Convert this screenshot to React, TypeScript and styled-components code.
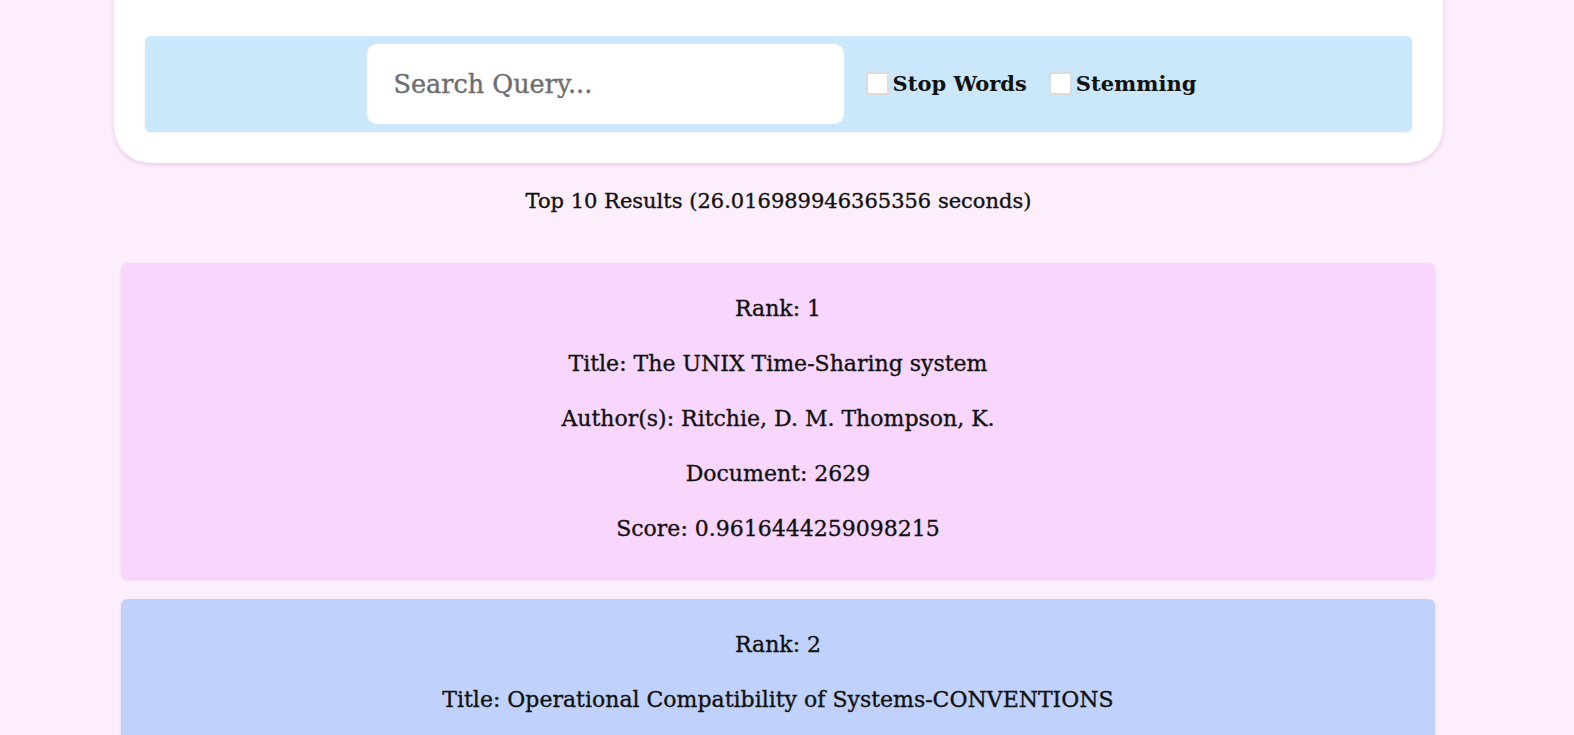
import React, { useLayoutEffect } from 'react';
import styled, { createGlobalStyle } from 'styled-components';

const GlobalStyle = createGlobalStyle`
  html, body {
    margin: 0;
    padding: 0;
    background: #fdeefc;
  }
  body {
    font-family: "DejaVu Serif", "Liberation Serif", serif;
    color: #111;
  }
  ::-webkit-scrollbar {
    width: 4px;
  }
  ::-webkit-scrollbar-track {
    background: #f1f1f1;
  }
  ::-webkit-scrollbar-thumb {
    background: #c1c1c1;
    border-left: 2px solid #f1f1f1;
  }
`;

const Page = styled.div`
  padding: 16px 131px 24px 114px;
`;

const SearchCard = styled.div`
  background: #ffffff;
  border-radius: 36px;
  padding: 262px 31px 31px;
  box-shadow: 0 2px 4px rgba(210, 160, 205, 0.45);
`;

const SearchBar = styled.div`
  background: #cbe7fc;
  border-radius: 6px;
  height: 96px;
  display: flex;
  align-items: center;
  justify-content: center;
  gap: 22px;
  padding-left: 6px;
  box-shadow: 0 1px 3px rgba(0, 0, 0, 0.08);
`;

const QueryInput = styled.input`
  width: 477px;
  height: 80px;
  box-sizing: border-box;
  border: none;
  border-radius: 10px;
  background: #fff;
  padding: 0 27px;
  font-family: inherit;
  font-size: 25.5px;
  color: #333;
  outline: none;
  -webkit-text-stroke: 0.4px currentColor;
  &::placeholder {
    color: #6e6e6e;
  }
`;

const CheckLabel = styled.label`
  display: flex;
  align-items: center;
  gap: 4px;
  font-size: 21px;
  font-weight: 700;
  color: #111;
  padding-bottom: 2px;
`;

const Box = styled.input`
  appearance: none;
  width: 23px;
  height: 23px;
  margin: 0;
  box-sizing: border-box;
  background: #fff;
  border: 2px solid #dcdcdc;
`;

const Summary = styled.div`
  text-align: center;
  font-size: 21px;
  line-height: 33px;
  margin: 22px 0 45px;
  -webkit-text-stroke: 0.35px currentColor;
`;

const Results = styled.div`
  display: flex;
  flex-direction: column;
  gap: 20px;
  margin: 0 8px 0 7px;
`;

const ResultCard = styled.div<{ $tone: string }>`
  background: ${(p) => p.$tone};
  border-radius: 6px;
  padding: 29px 20px 34px;
  display: flex;
  flex-direction: column;
  gap: 22px;
  box-shadow: 0 1px 3px rgba(120, 80, 120, 0.15);
`;

const Line = styled.p`
  margin: 0;
  text-align: center;
  font-size: 22px;
  line-height: 33px;
  -webkit-text-stroke: 0.35px currentColor;
`;

type Result = {
  title: string;
  authors?: string;
  doc?: number;
  score?: string;
};

const results: Result[] = [
  { title: 'The UNIX Time-Sharing system', authors: 'Ritchie, D. M. Thompson, K.', doc: 2629, score: '0.9616444259098215' },
  { title: 'Operational Compatibility of Systems-CONVENTIONS' },
];

const tones = ['#f8d6fd', '#c0d2fb'];

export default function App() {
  useLayoutEffect(() => {
    window.scrollTo(0, 242);
  }, []);

  return (
    <>
      <GlobalStyle />
      <Page>
        <SearchCard>
          <SearchBar>
            <QueryInput placeholder="Search Query..." />
            <CheckLabel>
              <Box type="checkbox" />
              Stop Words
            </CheckLabel>
            <CheckLabel>
              <Box type="checkbox" />
              Stemming
            </CheckLabel>
          </SearchBar>
        </SearchCard>
        <Summary>Top 10 Results (26.016989946365356 seconds)</Summary>
        <Results>
          {results.map((r, i) => (
            <ResultCard key={r.title} $tone={tones[i % 2]}>
              <Line>Rank: {i + 1}</Line>
              <Line>Title: {r.title}</Line>
              {r.authors && <Line>Author(s): {r.authors}</Line>}
              {r.doc && <Line>Document: {r.doc}</Line>}
              {r.score && <Line>Score: {r.score}</Line>}
            </ResultCard>
          ))}
        </Results>
      </Page>
    </>
  );
}
